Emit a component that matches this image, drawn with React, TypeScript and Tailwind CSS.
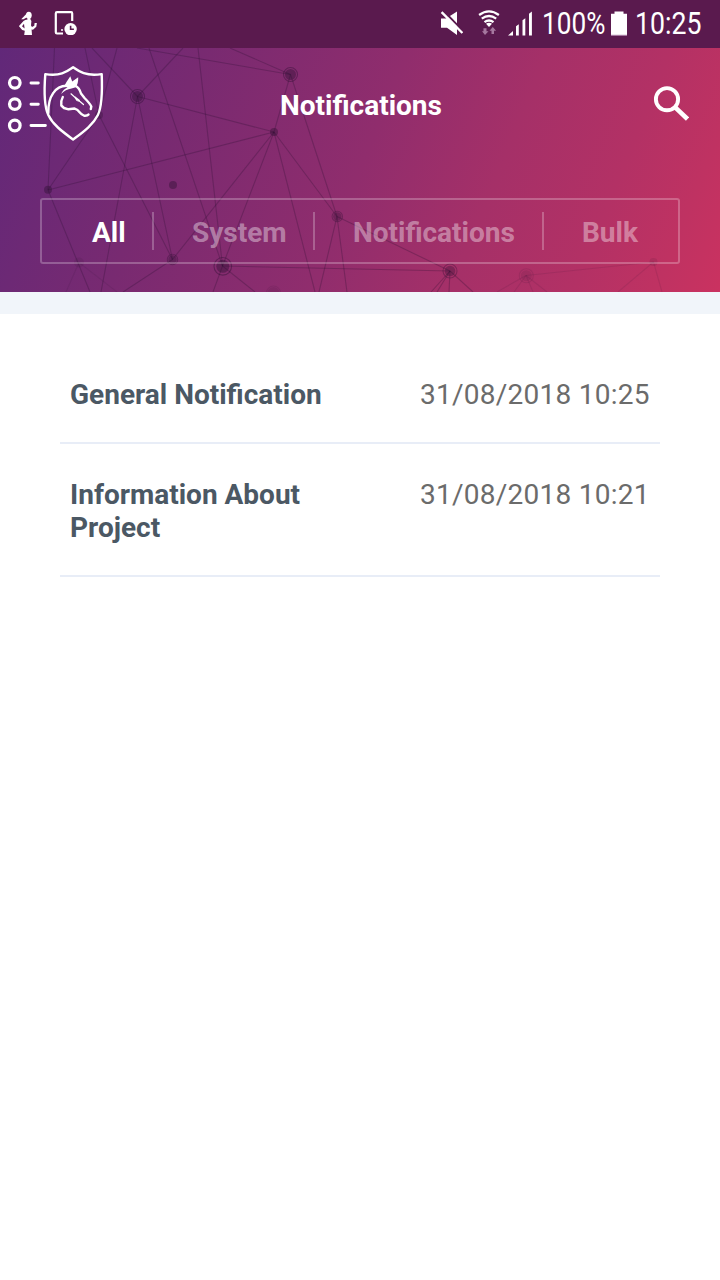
import React from "react";

type Pt = [number, number];

const edges: [Pt, Pt][] = [
  [[54.5, 48], [48, 190]],
  [[85, 48], [99, 115]],
  [[92, 48], [137.5, 96.5]],
  [[117, 48], [99, 115]],
  [[99, 115], [48, 190]],
  [[99, 115], [172.5, 259.5]],
  [[137.5, 96.5], [183, 48]],
  [[137.5, 96.5], [274, 132]],
  [[137.5, 96.5], [101, 292]],
  [[137.5, 96.5], [172.5, 259.5]],
  [[137, 48], [290.5, 74.5]],
  [[230, 48], [290.5, 74.5]],
  [[290.5, 74.5], [274, 132]],
  [[290.5, 74.5], [337, 216.5]],
  [[149, 48], [222.5, 266]],
  [[198, 48], [222.5, 266]],
  [[274, 132], [48, 190]],
  [[274, 132], [172.5, 259.5]],
  [[274, 132], [222.5, 266]],
  [[274, 132], [337, 216.5]],
  [[274, 132], [315, 292]],
  [[337, 216.5], [450, 271]],
  [[337, 216.5], [319, 292]],
  [[337, 216.5], [347, 292]],
  [[48, 190], [90, 292]],
  [[172.5, 259.5], [123, 292]],
  [[222.5, 266], [213, 292]],
  [[222.5, 266], [255, 292]],
  [[222.5, 266], [450, 271]],
  [[450, 271], [431, 292]],
  [[450, 271], [437, 292]],
  [[450, 271], [449, 292]],
  [[450, 271], [473, 292]],
];

const faintEdges: [Pt, Pt][] = [
  [[79, 262.5], [66, 292]],
  [[79, 262.5], [117, 292]],
  [[526, 275.5], [497, 292]],
  [[526, 275.5], [514, 292]],
  [[526, 275.5], [533, 292]],
  [[526, 275.5], [547, 292]],
  [[526, 275.5], [653.5, 262]],
  [[653.5, 262], [618, 292]],
  [[653.5, 262], [662, 292]],
];

const nodes = [
  { x: 290.5, y: 74.5, r: 5.5, ring: 7, o: 0.4 },
  { x: 137.5, y: 96.5, r: 5.5, ring: 7, o: 0.4 },
  { x: 274, y: 132, r: 4, ring: 0, o: 0.4 },
  { x: 48, y: 189.7, r: 4, ring: 0, o: 0.4 },
  { x: 173, y: 185, r: 4, ring: 0, o: 0.4 },
  { x: 99, y: 115, r: 4, ring: 0, o: 0.3 },
  { x: 337.3, y: 216.5, r: 4.2, ring: 5.2, o: 0.32 },
  { x: 172.5, y: 259.5, r: 4.2, ring: 5.2, o: 0.32 },
  { x: 222.8, y: 266.3, r: 6.5, ring: 8.8, o: 0.4 },
  { x: 450, y: 271, r: 5.3, ring: 7, o: 0.32 },
  { x: 526.3, y: 275.7, r: 5.5, ring: 7, o: 0.11 },
  { x: 653.5, y: 262, r: 4, ring: 0, o: 0.11 },
  { x: 79, y: 262.5, r: 5, ring: 0, o: 0.11 },
  { x: 273.5, y: 293, r: 6, ring: 7, o: 0.11 },
];

function Network() {
  return (
    <svg className="absolute inset-0 h-full w-full" viewBox="0 48 720 244" stroke="#2a0f30" fill="#2a0f30">
      {edges.map(([a, b], i) => (
        <line key={i} x1={a[0]} y1={a[1]} x2={b[0]} y2={b[1]} strokeOpacity="0.27" strokeWidth="1.1" />
      ))}
      {faintEdges.map(([a, b], i) => (
        <line key={i} x1={a[0]} y1={a[1]} x2={b[0]} y2={b[1]} strokeOpacity="0.1" strokeWidth="1.1" />
      ))}
      {nodes.map((n, i) => (
        <g key={i} opacity={n.o}>
          <circle cx={n.x} cy={n.y} r={n.r} stroke="none" />
          {n.ring > 0 && <circle cx={n.x} cy={n.y} r={n.ring} fill="none" strokeWidth="1.1" />}
        </g>
      ))}
    </svg>
  );
}

function RunnerIcon() {
  return (
    <svg className="h-6 w-[18px]" viewBox="19 11 18 24" fill="#fff">
      <ellipse cx="28.800" cy="15.200" rx="2.900" ry="3.500" />
      <path d="M26.500 13.800 L21.200 19.200 L23.500 19.200 L27.400 17Z" />
      <path d="M27.500 17 H30.300 V19 L31.400 21 L31 25.500 L32 27 L34.300 25.700 L34.600 23 L36.900 23 L36.300 26.800 L33 29.800 L31.600 29.500 L32 35 H24.200 L24.800 30.800 L22.200 30 L18.900 26.200 L23.500 21 Q25 19.500 27.500 19.500Z M24 23.800 L22 26.300 L24.600 28.500Z" fillRule="evenodd" />
    </svg>
  );
}

function DeviceClockIcon() {
  return (
    <svg className="h-6 w-6" viewBox="54 11 24 24" fill="none">
      <path d="M63 33.5 H57 Q55.8 33.5 55.8 32.3 V13.5 Q55.8 12.2 57 12.2 H71.2 Q72.2 12.2 72.2 13.5 V21" stroke="#fff" strokeWidth="2.2" />
      <circle cx="62" cy="30" r="1" fill="#fff" />
      <circle cx="70.6" cy="29.1" r="6.2" fill="#fff" />
      <path d="M70.6 25.8 V29.3 H73.9" stroke="#5a1a4e" strokeWidth="1.6" />
    </svg>
  );
}

function MuteIcon() {
  return (
    <svg className="h-6 w-[23px]" viewBox="440 11 23 24" fill="#fff">
      <path d="M441 18.5 H446 L457 11.5 V35 L447 27.8 H441Z" />
      <path d="M443 10.4 L464 32" stroke="#5a1a4e" strokeWidth="2.2" />
      <path d="M441.6 12.2 L462.4 33" stroke="#fff" strokeWidth="2.400" />
    </svg>
  );
}

function WifiIcon() {
  return (
    <svg className="h-[26px] w-[22px]" viewBox="477.500 10 22 26" fill="none" stroke="#fff" strokeWidth="2.300">
      <path d="M478.600 15 Q488.500 7.800 498.400 15" />
      <path d="M481.300 18.600 Q488.500 13.300 495.700 18.600" />
      <path d="M484 22.200 Q488.500 18.800 493 22.200" />
      <path d="M485.500 23.800 Q488.500 21.900 491.500 23.800 L488.500 27Z" fill="#fff" stroke="none" />
      <g fill="#a5789f" stroke="none">
        <path d="M483 28.300 H486 V31.300 H488 L484.500 35 L481.500 31.300 H483Z" />
        <path d="M491 34 V30.700 H489 L492.300 27 L495.600 30.700 H493.500 V34Z" />
      </g>
    </svg>
  );
}

function SignalIcon() {
  return (
    <svg className="h-[25px] w-[25px]" viewBox="508 10.500 25 25" fill="#fff">
      <path d="M508 35 L513 30.500 V35Z" />
      <path d="M516 25.700 L518.800 23.800 V35 H516Z" />
      <path d="M522.500 19.800 L525.300 17.800 V35 H522.500Z" />
      <path d="M529 13.300 L531.900 11 V35 H529Z" />
    </svg>
  );
}

function BatteryIcon() {
  return (
    <svg className="h-[25px] w-4" viewBox="611 10.500 16 25">
      <path d="M614.500 11 H623.500 V13.300 H627 V35.500 H611 V13.300 H614.500Z" fill="#fff" />
      <path d="M611 34.300 H627 V35.500 H611Z" fill="#a5789f" />
    </svg>
  );
}

function MenuLogo() {
  return (
    <svg className="h-[80px] w-[98px]" viewBox="7 63 98 80" fill="none" stroke="#fff" strokeLinecap="round" strokeLinejoin="round">
      <g strokeWidth="3.200">
        <circle cx="14.800" cy="82.800" r="5.300" />
        <circle cx="14.800" cy="104.100" r="5.300" />
        <circle cx="14.800" cy="125.500" r="5.300" />
        <path strokeWidth="2.900" d="M31 83 H38.300 M31 104.200 H38.300 M31 125.500 H45.400" />
      </g>
      <path strokeWidth="2.400" d="M73.100 67.300 C67 71.500 61 76.500 45.300 74.100 C43.600 96 44.500 107 48.300 115 C53 125 63 132 73.100 139.500 C83 132 93 125 97.900 115 C101.700 107 102.600 96 101.700 74.100 C86 76.500 79 71.500 73.100 67.300Z" />
      <path strokeWidth="2.400" d="M48.300 113 C48 96 55.500 86 66.500 85.800" />
      <path fill="#fff" stroke="none" d="M61 94 C62.500 90.500 65 88.500 67.500 87.500 L64 86.500 L66.500 82 L70.300 76.300 L72.200 81.500 L78.200 77.200 Q78.500 83 75.800 87.300 L71.500 88.500 Q65.500 89.300 61 94Z" />
      <path strokeWidth="2.400" d="M75.500 85.800 C78.500 87.500 80 90 81 93.500 L84.500 98 C87.500 101 90 103.500 91.300 106.500 L90.800 109" />
      <path strokeWidth="2.400" d="M62.800 97 C61.300 99.500 61 102.500 61.300 105.500 L64 108 L68.500 109.300 L74.500 108.500 L77.500 110 C79.500 112 81 115 84 115.700 Q87.500 116 88.500 114.500" />
      <path strokeWidth="1.200" d="M71 93.800 L74.500 97 L77 100.500 L80 101.500 L83.500 104.500 M75 97 L79.500 100.500" />
    </svg>
  );
}

function SearchIcon() {
  return (
    <svg className="h-9 w-9" viewBox="653 85 36 36" fill="none" stroke="#fff">
      <circle cx="667" cy="99.200" r="11.100" strokeWidth="3.900" />
      <path d="M675.200 107.300 L687.500 119" strokeWidth="4.600" />
    </svg>
  );
}

const rows = [
  { title: "General Notification", date: "31/08/2018 10:25" },
  { title: "Information About Project", date: "31/08/2018 10:21" },
];

export default function App() {
  return (
    <div className="flex h-[1280px] w-[720px] flex-col overflow-hidden bg-white font-['Roboto',sans-serif] text-[28px] leading-[33px]">
      <div className="flex h-12 items-start bg-[#5a1a4e] text-[31px] leading-[48px] text-white">
        <div className="flex flex-1 gap-[17px] pt-[11px] pl-[19px]">
          <RunnerIcon />
          <DeviceClockIcon />
        </div>
        <div className="flex w-[280px] shrink-0">
          <div className="pt-[11px]"><MuteIcon /></div>
          <div className="ml-[14.500px] pt-[10px]"><WifiIcon /></div>
          <div className="ml-[8.500px] pt-[10.500px]"><SignalIcon /></div>
          <div className="ml-[8.500px] w-[69.500px]">
            <span className="inline-block origin-left scale-x-[0.845]">100%</span>
          </div>
          <div className="pt-[10.500px]"><BatteryIcon /></div>
          <div className="ml-[8px]">
            <span className="inline-block origin-left scale-x-[0.86]">10:25</span>
          </div>
        </div>
      </div>

      <header className="relative h-[244px] bg-[linear-gradient(112deg,#612879_0%,#782a71_25%,#902d6d_50%,#a53068_67%,#b33165_82%,#bf3262_92%,#ca3260_100%)]">
        <Network />
        <div className="relative flex h-[150px] justify-between pt-[15px] pr-[31px] pl-[7px]">
          <MenuLogo />
          <h1 className="mt-[26px] -ml-1 font-bold text-white">Notifications</h1>
          <div className="flex w-[68px] justify-end pt-[22px]"><SearchIcon /></div>
        </div>
        <nav className="relative mx-10 flex h-[66px] items-center rounded-[3px] border-2 border-white/25 font-bold text-white/40">
          <div className="w-[110px] pt-[2px] pl-[50px] text-white">All</div>
          <div className="h-[38px] w-[2px] bg-white/25" />
          <div className="w-[159px] pt-[2px] pl-[38px]">System</div>
          <div className="h-[38px] w-[2px] bg-white/25" />
          <div className="w-[227px] pt-[2px] pl-[38px]">Notifications</div>
          <div className="h-[38px] w-[2px] bg-white/25" />
          <div className="pt-[2px] pl-[38px]">Bulk</div>
        </nav>
      </header>

      <div className="h-[22px] bg-[#f1f5fa]" />

      <main className="px-[60px] pt-[30px]">
        {rows.map((r) => (
          <div key={r.title} className="flex border-b-2 border-[#e8edf7] px-[10px] pt-[34px] pb-[31px]">
            <div className="w-[350px] shrink-0 pr-[60px] font-bold text-[#4b5864]">{r.title}</div>
            <div className="whitespace-nowrap tracking-[0.26px] text-[#6b6b6b]">{r.date}</div>
          </div>
        ))}
      </main>
    </div>
  );
}
